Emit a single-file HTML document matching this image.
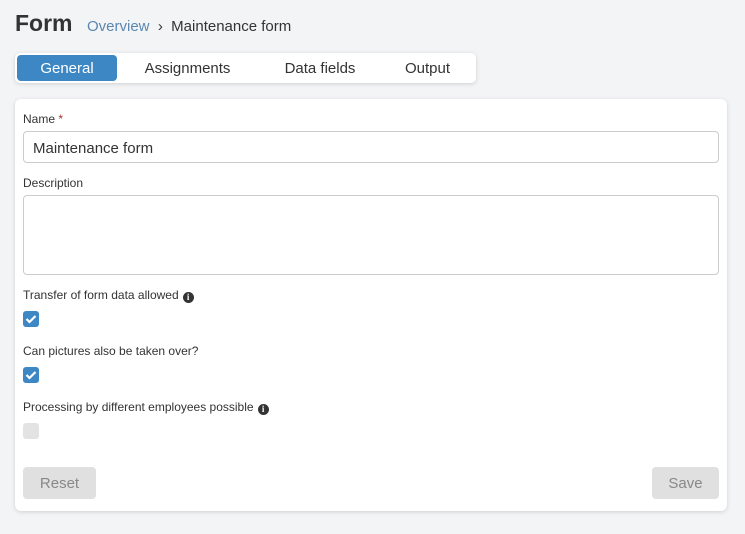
<!DOCTYPE html>
<html><head><style>
body{margin:0;width:745px;height:534px;background:#f3f4f6;font-family:"Liberation Sans",sans-serif;color:#333;position:relative;overflow:hidden}
.a{position:absolute}
.title{left:15px;top:10px;font-size:23px;font-weight:bold;color:#333}
.bc{left:87px;top:18px;font-size:15px;color:#333}
.bc span{color:#5b87b0}
.tabs{left:15px;top:53px;width:461px;height:30px;background:#fff;border-radius:5px;box-shadow:0 1px 4px rgba(0,0,0,.15)}
.tab{position:absolute;top:2px;height:26px;line-height:28px;font-size:15px;color:#333;text-align:center}
.card{left:15px;top:99px;width:712px;height:412px;background:#fff;border-radius:6px;box-shadow:0 1px 4px rgba(0,0,0,.15)}
.lbl{font-size:12px;color:#333;left:23px}
.inp{left:23px;width:694px;border:1px solid #ccc;border-radius:4px;background:#fff}
.cb{left:23px;width:16px;height:16px;border-radius:3px;background:#3d87c5}
.cb svg{position:absolute;left:2px;top:3px}
.info{display:inline-block;width:11px;height:11px;border-radius:50%;background:#333;color:#fff;font-size:9px;line-height:11px;text-align:center;font-weight:bold;vertical-align:-1px;margin-left:4px;font-family:"Liberation Serif",serif}
.btn{top:467px;height:32px;line-height:34px;background:#e0e0e0;border-radius:4px;color:#888;font-size:15px;text-align:center}
</style></head><body>
<div class="a title">Form</div>
<div class="a bc"><span>Overview</span> &nbsp;›&nbsp; Maintenance form</div>
<div class="a tabs">
<div class="tab" style="left:2px;width:100px;background:#3d87c5;color:#fff;border-radius:4px">General</div>
<div class="tab" style="left:120px;width:105px">Assignments</div>
<div class="tab" style="left:260px;width:90px">Data fields</div>
<div class="tab" style="left:380px;width:65px">Output</div>
</div>
<div class="a card"></div>
<div class="a lbl" style="top:112px">Name <span style="color:#a33">*</span></div>
<div class="a inp" style="top:131px;height:30px;line-height:33px;font-size:15px;padding-left:9px;width:685px">Maintenance form</div>
<div class="a lbl" style="top:176px">Description</div>
<div class="a inp" style="top:195px;height:78px"></div>
<div class="a lbl" style="top:288px">Transfer of form data allowed<span class="info">i</span></div>
<div class="a cb" style="top:311px"><svg width="12" height="10"><path d="M1.5 5l3 3 6-6" stroke="#fff" stroke-width="2.2" fill="none"/></svg></div>
<div class="a lbl" style="top:344px">Can pictures also be taken over?</div>
<div class="a cb" style="top:367px"><svg width="12" height="10"><path d="M1.5 5l3 3 6-6" stroke="#fff" stroke-width="2.2" fill="none"/></svg></div>
<div class="a lbl" style="top:400px">Processing by different employees possible<span class="info">i</span></div>
<div class="a cb" style="top:423px;background:#e3e3e3"></div>
<div class="a btn" style="left:23px;width:73px">Reset</div>
<div class="a btn" style="left:652px;width:67px">Save</div>
</body></html>
